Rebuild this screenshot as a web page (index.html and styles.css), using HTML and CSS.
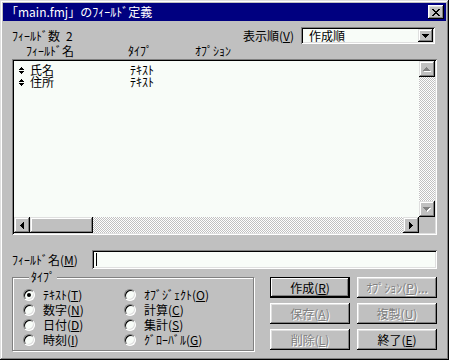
FILE: index.html
```html
<!DOCTYPE html>
<html lang="ja">
  <head>
    <meta charset="utf-8" />
    <title>フィールド定義</title>
    <link rel="stylesheet" href="styles.css">
  </head>
  <body>
    <div class="window">
      <div class="titlebar">
        <span class="title">「main.fmj」のﾌｨｰﾙﾄﾞ定義</span>
        <button type="button" class="close">
          <svg width="8" height="7" viewBox="0 0 8 7" shape-rendering="crispEdges"><path d="M0 0h2v1H0zM6 0h2v1H6zM1 1h2v1H1zM5 1h2v1H5zM2 2h4v1H2zM3 3h2v1H3zM2 4h4v1H2zM1 5h2v1H1zM5 5h2v1H5zM0 6h2v1H0zM6 6h2v1H6z" fill="#000"/></svg>
        </button>
      </div>

      <div class="content">
        <div class="toprow">
          <span class="count">ﾌｨｰﾙﾄﾞ数<span class="count-num">2</span></span>
          <span class="sort-label">表示順(<u>V</u>)</span>
          <div class="combo">
            <span class="combo-value">作成順</span>
            <span class="combo-btn">
              <svg width="7" height="4" viewBox="0 0 7 4" shape-rendering="crispEdges"><path d="M0 0h7v1H0zM1 1h5v1H1zM2 2h3v1H2zM3 3h1v1H3z" fill="#000"/></svg>
            </span>
          </div>
        </div>

        <div class="headers">
          <span>ﾌｨｰﾙﾄﾞ名</span>
          <span>ﾀｲﾌﾟ</span>
          <span>ｵﾌﾟｼｮﾝ</span>
        </div>

        <div class="listbox">
          <div class="items">
            <div class="item">
              <svg class="handle" width="5" height="7" viewBox="0 0 5 7" shape-rendering="crispEdges"><path d="M2 0h1v1H2zM1 1h3v1H1zM0 2h5v1H0zM0 4h5v1H0zM1 5h3v1H1zM2 6h1v1H2z" fill="#000"/></svg>
              <span class="item-name">氏名</span>
              <span class="item-type">ﾃｷｽﾄ</span>
            </div>
            <div class="item">
              <svg class="handle" width="5" height="7" viewBox="0 0 5 7" shape-rendering="crispEdges"><path d="M2 0h1v1H2zM1 1h3v1H1zM0 2h5v1H0zM0 4h5v1H0zM1 5h3v1H1zM2 6h1v1H2z" fill="#000"/></svg>
              <span class="item-name">住所</span>
              <span class="item-type">ﾃｷｽﾄ</span>
            </div>
          </div>

          <div class="vscroll">
            <span class="sbtn">
              <svg width="8" height="5" viewBox="0 0 8 5" shape-rendering="crispEdges"><path d="M4 1h1v1H4zM3 2h3v1H3zM2 3h5v1H2zM1 4h7v1H1z" fill="#fff"/><path d="M3 0h1v1H3zM2 1h3v1H2zM1 2h5v1H1zM0 3h7v1H0z" fill="#808080"/></svg>
            </span>
            <span class="track"></span>
            <span class="sbtn">
              <svg width="8" height="5" viewBox="0 0 8 5" shape-rendering="crispEdges"><path d="M1 1h7v1H1zM2 2h5v1H2zM3 3h3v1H3zM4 4h1v1H4z" fill="#fff"/><path d="M0 0h7v1H0zM1 1h5v1H1zM2 2h3v1H2zM3 3h1v1H3z" fill="#808080"/></svg>
            </span>
          </div>

          <div class="hscroll">
            <span class="sbtn">
              <svg width="4" height="7" viewBox="0 0 4 7" shape-rendering="crispEdges"><path d="M3 0h1v7H3zM2 1h1v5H2zM1 2h1v3H1zM0 3h1v1H0z" fill="#000"/></svg>
            </span>
            <span class="thumb"></span>
            <span class="track"></span>
            <span class="sbtn">
              <svg width="4" height="7" viewBox="0 0 4 7" shape-rendering="crispEdges"><path d="M0 0h1v7H0zM1 1h1v5H1zM2 2h1v3H2zM3 3h1v1H3z" fill="#000"/></svg>
            </span>
          </div>

          <div class="corner"></div>
        </div>

        <div class="namerow">
          <span class="name-label">ﾌｨｰﾙﾄﾞ名(<u>M</u>)</span>
          <div class="field"><span class="caret"></span></div>
        </div>

        <div class="bottom">
          <fieldset class="types">
            <legend>ﾀｲﾌﾟ</legend>
            <div class="radios">
              <label class="radio"><span class="dot checked"></span>ﾃｷｽﾄ(<u>T</u>)</label>
              <label class="radio"><span class="dot"></span>ｵﾌﾞｼﾞｪｸﾄ(<u>O</u>)</label>
              <label class="radio"><span class="dot"></span>数字(<u>N</u>)</label>
              <label class="radio"><span class="dot"></span>計算(<u>C</u>)</label>
              <label class="radio"><span class="dot"></span>日付(<u>D</u>)</label>
              <label class="radio"><span class="dot"></span>集計(<u>S</u>)</label>
              <label class="radio"><span class="dot"></span>時刻(<u>I</u>)</label>
              <label class="radio"><span class="dot"></span>ｸﾞﾛｰﾊﾞﾙ(<u>G</u>)</label>
            </div>
          </fieldset>

          <div class="buttons">
            <button type="button" class="btn default">作成(<u>R</u>)</button>
            <button type="button" class="btn disabled">ｵﾌﾟｼｮﾝ(<u>P</u>)...</button>
            <button type="button" class="btn disabled">保存(<u>A</u>)</button>
            <button type="button" class="btn disabled">複製(<u>U</u>)</button>
            <button type="button" class="btn disabled">削除(<u>L</u>)</button>
            <button type="button" class="btn">終了(<u>E</u>)</button>
          </div>
        </div>
      </div>
    </div>
  </body>
</html>
```

FILE: styles.css
```css
html, body {
  margin: 0;
  background: #c0c0c0;
}

body {
  font-family: "Noto Sans CJK JP", "DejaVu Sans", sans-serif;
  font-size: 12px;
  line-height: 12px;
  color: #000;
}

u {
  text-decoration: underline;
  text-underline-offset: 1px;
}

.window {
  box-sizing: border-box;
  width: 449px;
  height: 360px;
  padding: 3px;
  background: #c0c0c0;
  box-shadow: inset -1px -1px #000, inset 1px 1px #dfdfdf, inset -2px -2px #808080, inset 2px 2px #fff;
  display: flex;
  flex-direction: column;
}

.titlebar {
  height: 18px;
  background: #000080;
  color: #fff;
  display: flex;
  align-items: center;
  justify-content: space-between;
  padding: 0 2px 0 3px;
}

.close {
  width: 16px;
  height: 14px;
  padding: 0;
  border: 0;
  background: #c0c0c0;
  box-shadow: inset -1px -1px #000, inset 1px 1px #fff, inset -2px -2px #808080, inset 2px 2px #dfdfdf;
  display: flex;
  align-items: center;
  justify-content: center;
}

.content {
  flex: 1;
  padding: 0 9px;
  display: flex;
  flex-direction: column;
}

.toprow {
  display: flex;
  align-items: center;
  margin-top: 6px;
  height: 17px;
}

.count {
  margin-right: auto;
}

.count-num {
  margin-left: 6px;
}

.sort-label {
  margin-right: 7px;
}

.combo {
  box-sizing: border-box;
  width: 134px;
  height: 17px;
  margin-right: 2px;
  padding: 2px;
  background: #f8fcf8;
  box-shadow: inset 1px 1px #808080, inset -1px -1px #fff, inset 2px 2px #000, inset -2px -2px #dfdfdf;
  display: flex;
  align-items: center;
}

.combo-value {
  flex: 1;
  padding-left: 6px;
}

.combo-btn {
  width: 15px;
  height: 13px;
  background: #c0c0c0;
  box-shadow: inset -1px -1px #000, inset 1px 1px #dfdfdf, inset -2px -2px #808080, inset 2px 2px #fff;
  display: flex;
  align-items: center;
  justify-content: center;
}

.headers {
  display: grid;
  grid-template-columns: 102px 67px auto;
  padding-left: 14px;
  margin-top: 1px;
  height: 12px;
}

.listbox {
  box-sizing: border-box;
  height: 176px;
  margin-top: 2px;
  padding: 2px;
  background: #f8fcf8;
  box-shadow: inset 1px 1px #808080, inset -1px -1px #fff, inset 2px 2px #000, inset -2px -2px #dfdfdf;
  display: grid;
  grid-template-columns: 1fr 16px;
  grid-template-rows: 1fr 16px;
}

.items {
  padding-top: 3px;
}

.item {
  display: flex;
  align-items: center;
  height: 12px;
}

.handle {
  margin-left: 5px;
}

.item-name {
  margin-left: 6px;
  width: 100px;
}

.vscroll {
  display: flex;
  flex-direction: column;
}

.hscroll {
  display: flex;
}

.track {
  flex: 1;
  background-color: #c0c0c0;
  background-image: conic-gradient(#fff 25%, #c0c0c0 0 50%, #fff 0 75%, #c0c0c0 0);
  background-size: 2px 2px;
}

.sbtn, .thumb {
  width: 16px;
  height: 16px;
  box-sizing: border-box;
  background: #c0c0c0;
  box-shadow: inset -1px -1px #000, inset 1px 1px #dfdfdf, inset -2px -2px #808080, inset 2px 2px #fff;
  display: flex;
  align-items: center;
  justify-content: center;
}

.thumb {
  width: 63px;
}

.corner {
  background: #c0c0c0;
}

.namerow {
  display: flex;
  align-items: center;
  margin-top: 15px;
  height: 19px;
}

.name-label {
  width: 80px;
}

.field {
  flex: 1;
  height: 19px;
  box-sizing: border-box;
  padding: 3px 4px;
  background: #f8fcf8;
  box-shadow: inset 1px 1px #808080, inset -1px -1px #fff, inset 2px 2px #000, inset -2px -2px #dfdfdf;
}

.caret {
  display: block;
  width: 1px;
  height: 13px;
  background: #000;
}

.bottom {
  display: flex;
  justify-content: space-between;
  align-items: flex-start;
  margin-top: 2px;
}

.types {
  box-sizing: border-box;
  width: 242px;
  margin: 0;
  padding: 4px 0 3px 10px;
  border: 1px solid #808080;
  box-shadow: 1px 1px 0 #fff, inset 1px 1px 0 #fff;
}

.types legend {
  margin-left: 6px;
  padding: 0 2px;
  background: #c0c0c0;
  line-height: 12px;
}

.radios {
  display: grid;
  grid-template-columns: 101px auto;
  grid-auto-rows: 15px;
}

.radio {
  display: flex;
  align-items: center;
}

.dot {
  box-sizing: border-box;
  width: 12px;
  height: 12px;
  margin-right: 8px;
  border-radius: 50%;
  border: 1px solid;
  border-color: #808080 #fff #fff #808080;
  background: #f8fcf8;
  box-shadow: inset 1px 1px #000, inset -1px -1px #dfdfdf;
  display: flex;
  align-items: center;
  justify-content: center;
}

.dot.checked::after {
  content: "";
  width: 4px;
  height: 4px;
  border-radius: 50%;
  background: #000;
}

.buttons {
  display: grid;
  grid-template-columns: 80px 80px;
  grid-auto-rows: 21px;
  column-gap: 7px;
  row-gap: 5px;
  margin-top: 6px;
}

.btn {
  font: inherit;
  color: #000;
  padding: 0;
  border: 0;
  background: #c0c0c0;
  box-shadow: inset -1px -1px #000, inset 1px 1px #fff, inset -2px -2px #808080, inset 2px 2px #dfdfdf;
}

.btn.default {
  box-shadow: inset 0 0 0 1px #000, inset -2px -2px #000, inset 2px 2px #fff, inset -3px -3px #808080;
}

.btn.disabled {
  color: #808080;
  text-shadow: 1px 1px #fff;
}
```
